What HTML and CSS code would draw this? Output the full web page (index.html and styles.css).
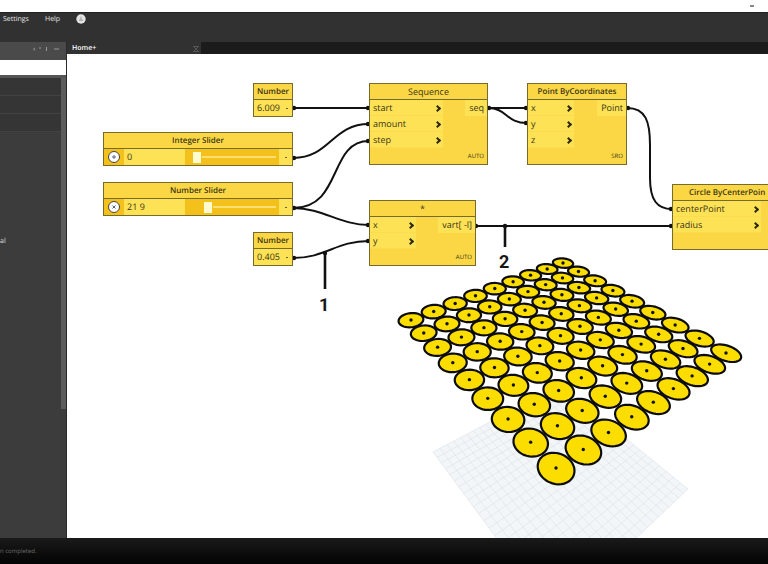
FILE: index.html
```html
<!DOCTYPE html>
<html lang="en">
<head>
<meta charset="utf-8">
<title>Home+</title>
<link rel="stylesheet" href="styles.css">
</head>
<body>
<div class="app">
  <header class="titlebar"><button class="minimize" aria-label="Minimize"></button></header>
  <nav class="menubar">
    <a href="#">Settings</a>
    <a href="#">Help</a>
    <button class="notice" aria-label="Notifications">
      <svg viewBox="0 0 10 10"><circle cx="5" cy="5" r="4.7" fill="#e4e4e4"/><path d="M5 2.500v4M3 6.500h4M3.500 5h3" stroke="#aaa" fill="none"/></svg>
    </button>
  </nav>
  <div class="body">
    <aside class="library">
      <div class="library-head">
        <svg viewBox="0 0 28 8"><path d="M3 3L1.500 4L3 5.500M8 2v2M14.500 2v4M22 4h5" stroke="#999" fill="none"/></svg>
      </div>
      <input class="search" type="text" aria-label="Search library">
      <div class="library-body">
        <ul class="categories">
          <li></li><li></li><li></li><li class="open">al</li>
        </ul>
        <div class="scroll"><div class="thumb"></div></div>
      </div>
    </aside>
    <main class="workspace">
      <div class="tabs">
        <div class="tab"><span>Home+</span>
          <button class="close" aria-label="Close tab"><svg viewBox="0 0 6 6"><path d="M1 1l4 4M5 1L1 5M0 .5h6M0 5.500h6" stroke="#666" stroke-width=".7"/></svg></button>
        </div>
      </div>
      <div class="canvas">
        <svg class="scene" viewBox="67 54 701 484" aria-hidden="true">
          <g id="ground" class="ground"></g>
          <g id="circles" class="circles"></g>
          <g class="wires">
            <path d="M293 108H369"/>
            <path d="M293 158C330 158 332 124 369 124"/>
            <path d="M293 208C343 208 328 141 369 141"/>
            <path d="M293 208C323 208 340 225 369 225"/>
            <path d="M293 258C326 258 336 241 369 241"/>
            <path d="M488 108H527"/>
            <path d="M488 108C507 108 506 123 527 123"/>
            <path d="M627 108C646 108 650 122 650 145V178C650 200 657 209 672 209"/>
            <path d="M475 226H672"/>
          </g>
          <g class="leaders"><path d="M325 253V289M505 226V247"/></g>
          <g class="ports">
            <circle cx="325" cy="253" r="2.200"/><circle cx="505" cy="226" r="2.200"/>
            <circle cx="294" cy="108" r="2.200"/><circle cx="294" cy="158" r="2.200"/><circle cx="294" cy="208" r="2.200"/><circle cx="294" cy="258" r="2.200"/>
            <circle cx="368" cy="108" r="2.200"/><circle cx="368" cy="124" r="2.200"/><circle cx="368" cy="141" r="2.200"/>
            <circle cx="368" cy="225" r="2.200"/><circle cx="368" cy="241" r="2.200"/>
            <circle cx="489" cy="108" r="2.200"/><circle cx="526" cy="108" r="2.200"/><circle cx="526" cy="123" r="2.200"/>
            <circle cx="628" cy="108" r="2.200"/><circle cx="671" cy="209" r="2.200"/><circle cx="671" cy="226" r="2.200"/><circle cx="476" cy="226" r="2.200"/>
          </g>
        </svg>

        <section class="node number-a">
          <h2>Number</h2>
          <div class="value-row"><input type="text" value="6.009" aria-label="Number value"><span class="port"></span></div>
        </section>
        <section class="node integer-slider">
          <h2>Integer Slider</h2>
          <div class="slider-row">
            <button class="expand" aria-label="Integer slider settings"><svg viewBox="0 0 12 12"><circle cx="6" cy="6" r="5.500" fill="#fff" stroke="#444"/><path d="M4 6h4M6 4v4" stroke="#55667c"/></svg></button>
            <input class="amount" type="text" value="0" aria-label="Integer value">
            <div class="track"><input type="range" min="0" max="100" value="3" style="--value: 3%" aria-label="Integer slider"></div>
            <span class="port"></span>
          </div>
        </section>
        <section class="node number-slider">
          <h2>Number Slider</h2>
          <div class="slider-row">
            <button class="expand" aria-label="Number slider settings"><svg viewBox="0 0 12 12"><circle cx="6" cy="6" r="5.500" fill="#fff" stroke="#444"/><path d="M4.500 4.500l3 3M7.500 4.500l-3 3" stroke="#55667c"/></svg></button>
            <input class="amount" type="text" value="21 9" aria-label="Number value">
            <div class="track"><input type="range" min="0" max="100" value="17" style="--value: 17%" aria-label="Number slider"></div>
            <span class="port"></span>
          </div>
        </section>
        <section class="node number-b">
          <h2>Number</h2>
          <div class="value-row"><input type="text" value="0.405" aria-label="Number value"><span class="port"></span></div>
        </section>

        <section class="node sequence">
          <h2 class="light">Sequence</h2>
          <div class="ports-row">
            <ul class="inputs"><li>start<i></i></li><li>amount<i></i></li><li>step<i></i></li></ul>
            <span class="output">seq</span>
          </div>
          <footer>AUTO</footer>
        </section>
        <section class="node multiply">
          <h2 class="light">*</h2>
          <div class="ports-row">
            <ul class="inputs"><li>x<i></i></li><li>y<i></i></li></ul>
            <span class="output">vart[ -l]</span>
          </div>
          <footer>AUTO</footer>
        </section>
        <section class="node point">
          <h2>Point ByCoordinates</h2>
          <div class="ports-row">
            <ul class="inputs"><li>x<i></i></li><li>y<i></i></li><li>z<i></i></li></ul>
            <span class="output">Point</span>
          </div>
          <footer>SRO</footer>
        </section>
        <section class="node circle">
          <h2>Circle ByCenterPoin</h2>
          <div class="ports-row">
            <ul class="inputs"><li>centerPoint<i></i></li><li>radius<i></i></li></ul>
          </div>
        </section>
        <span class="callout one">1</span>
        <span class="callout two">2</span>
      </div>
    </main>
  </div>
  <footer class="status">n completed.</footer>
</div>
<script src="scene.js"></script>
</body>
</html>
```
FILE: styles.css
```css
* { box-sizing: border-box; margin: 0; padding: 0; }
body { font-family: "Open Sans", "Noto Sans", sans-serif; background: #fff; text-rendering: geometricPrecision; }
button, input { font: inherit; color: inherit; border: 0; background: none; min-width: 0; text-rendering: inherit; }
ul { list-style: none; }
a { color: inherit; text-decoration: none; }
svg { display: block; }

.app { display: flex; flex-direction: column; height: 100vh; overflow: hidden; }
.titlebar { height: 12px; display: flex; justify-content: flex-end; align-items: center; padding-right: 14px; background: #fff; }
.minimize { width: 4px; height: 2px; background: #888; }
.menubar { height: 30px; display: flex; align-items: flex-start; gap: 16px; padding: 1px 3px 0; background: #313131; color: #e6e6e6; font-size: 7px; line-height: 11px; border-top: 1px solid #222; }
.notice { width: 10px; height: 10px; }
.body { flex: 1; display: flex; min-height: 0; }

.library { width: 67px; display: flex; flex-direction: column; background: #3b3c3b; border-right: 1px solid #2a2a2a; }
.library-head { height: 18px; display: flex; justify-content: flex-end; padding: 3px 6px; background: #4a4a4a; }
.library-head svg { width: 28px; height: 8px; }
.search { width: 100%; height: 15px; background: #fff; color: #333; font-size: 8px; }
.library-body { flex: 1; display: flex; border-top: 3px solid #555; min-height: 0; }
.categories { flex: 1; color: #ddd; font-size: 7px; line-height: 12px; }
.categories li { height: 18px; background: #353535; border-bottom: 1px solid #424242; }
.categories li.open { height: auto; padding-top: 104px; background: none; border: 0; }
.scroll { width: 5px; background: #3b3c3b; }
.thumb { height: 72%; background: #5c5c5c; }

.workspace { flex: 1; display: flex; flex-direction: column; min-width: 0; }
.tabs { height: 12px; display: flex; background: #1b1b1b; }
.tab { width: 134px; display: flex; align-items: center; justify-content: space-between; padding: 1px 2px 0 5px; background: #313131; color: #fff; font-size: 7px; line-height: 12px; font-weight: 600; }
.close { width: 6px; height: 6px; }
.canvas { flex: 1; position: relative; overflow: hidden; background: #fff; }
.scene { position: absolute; left: 0; top: 0; width: 701px; height: 484px; }

.wires path { fill: none; stroke: #111; stroke-width: 2; }
.leaders path { stroke: #111; stroke-width: 2.6; }
.ports circle { fill: #111; }
.circles path { fill: #fcdd00; stroke: #0c0c0c; stroke-width: 2.2; }
.circles circle { fill: #111; }
.ground polygon { fill: #f3f6f8; }
.ground line { stroke: #dbe1e6; stroke-width: .6; }

.node { position: absolute; background: #fbd745; border: 1px solid #766b2b; color: #3a3517; font-size: 9px; line-height: 16px; }
.node h2 { height: 16px; font-size: 8px; line-height: 16px; font-weight: 600; text-align: center; white-space: nowrap; border-bottom: 1px solid #766b2b; }
.node h2.light { font-size: 9px; font-weight: 400; }
.number-a { left: 186px; top: 29px; width: 40px; }
.integer-slider { left: 36px; top: 78px; width: 190px; }
.number-slider { left: 36px; top: 128px; width: 190px; }
.number-b { left: 186px; top: 178px; width: 40px; }
.sequence { left: 302px; top: 29px; width: 119px; }
.multiply { left: 302px; top: 146px; width: 107px; }
.point { left: 460px; top: 29px; width: 100px; }
.circle { left: 605px; top: 130px; width: 126px; height: 66px; }
.circle h2 { padding-left: 16px; text-align: left; }

.value-row { display: flex; height: 16px; background: #fee256; }
.value-row input { flex: 1; width: 20px; padding-left: 3px; }
.port { width: 13px; display: flex; align-items: center; justify-content: center; background: #fee256; }
.value-row .port { width: 11px; }
.port::before { content: ""; width: 2px; height: 1px; background: #6b5f26; }
.slider-row { display: flex; height: 16px; background: #f4c11c; }
.expand { width: 20px; display: flex; align-items: center; justify-content: center; }
.expand svg { width: 12px; height: 12px; }
.amount { width: 61px; padding-left: 3px; background: #fee256; }
.track { flex: 1; display: flex; align-items: center; padding: 0 3px 0 6px; }
.track input { appearance: none; width: 100%; height: 12px; background: linear-gradient(90deg, transparent calc(var(--value) + 8px), #fbe071 0) center / 100% 2px no-repeat; }
.track input::-webkit-slider-thumb { appearance: none; width: 8px; height: 11px; background: #fffbd0; border: 0; }

.ports-row { display: flex; justify-content: space-between; align-items: flex-start; }
.inputs { width: 73px; }
.inputs li { display: flex; align-items: center; justify-content: space-between; height: 16px; padding: 0 3px; background: #fee256; box-shadow: inset 0 -1px #fcdc4c; }
.inputs i { width: 5px; height: 5px; border: solid #2d280f; border-width: 2px 2px 0 0; transform: rotate(45deg); }
.output { height: 16px; padding: 0 3px 0 4px; background: #fee256; white-space: nowrap; }
.multiply .inputs, .point .inputs { width: 46px; }
.circle .inputs { width: 88px; }
.node footer { height: 16px; padding-right: 3px; text-align: right; font-size: 6px; line-height: 16px; }

.callout { position: absolute; font-family: Roboto, sans-serif; font-size: 18px; line-height: 20px; font-weight: 700; color: #161616; }
.one { left: 252px; top: 242px; }
.two { left: 432px; top: 199px; }

.status { height: 26px; padding-top: 6px; background: linear-gradient(#1a1a1a, #030303); color: #6c6c6c; font-size: 6px; line-height: 14px; }
```
FILE: scene.js
```js
const NS = "http://www.w3.org/2000/svg";

// Projective map from the unit square to a quad given as corners (0,0) (1,0) (1,1) (0,1).
function projector([[x0, y0], [x1, y1], [x2, y2], [x3, y3]]) {
  const dx1 = x1 - x2, dx2 = x3 - x2, sx = x0 - x1 + x2 - x3;
  const dy1 = y1 - y2, dy2 = y3 - y2, sy = y0 - y1 + y2 - y3;
  const det = dx1 * dy2 - dx2 * dy1;
  const g = (sx * dy2 - dx2 * sy) / det, h = (dx1 * sy - sx * dy1) / det;
  return (u, v) => {
    const w = g * u + h * v + 1;
    return [((x1 - x0 + g * x1) * u + (x3 - x0 + h * x3) * v + x0) / w,
            ((y1 - y0 + g * y1) * u + (y3 - y0 + h * y3) * v + y0) / w];
  };
}

function add(parent, name, attrs) {
  const el = document.createElementNS(NS, name);
  for (const key in attrs) el.setAttribute(key, attrs[key]);
  parent.append(el);
}

const ground = document.getElementById("ground");
const plane = [[433, 452], [560, 385], [688, 489], [554, 616]];
const onPlane = projector(plane);
add(ground, "polygon", { points: plane.join(" ") });
const cells = 22;
for (let i = 0; i <= cells; i++) {
  const t = i / cells;
  for (const [a, b] of [[onPlane(t, 0), onPlane(t, 1)], [onPlane(0, t), onPlane(1, t)]]) {
    add(ground, "line", { x1: a[0], y1: a[1], x2: b[0], y2: b[1] });
  }
}

const circles = document.getElementById("circles");
const onGrid = projector([[411, 320], [563, 263], [726, 353], [556, 468]]);
const steps = 8, radius = 0.47;
for (let row = 0; row <= steps; row++) {
  for (let col = steps; col >= 0; col--) {
    const points = [];
    for (let k = 0; k < 40; k++) {
      const a = k * Math.PI / 20;
      points.push(onGrid((col + radius * Math.cos(a)) / steps, (row + radius * Math.sin(a)) / steps));
    }
    add(circles, "path", { d: "M" + points.join("L") + "Z" });
    const [cx, cy] = onGrid(col / steps, row / steps);
    add(circles, "circle", { cx, cy, r: 1.7 });
  }
}
```
